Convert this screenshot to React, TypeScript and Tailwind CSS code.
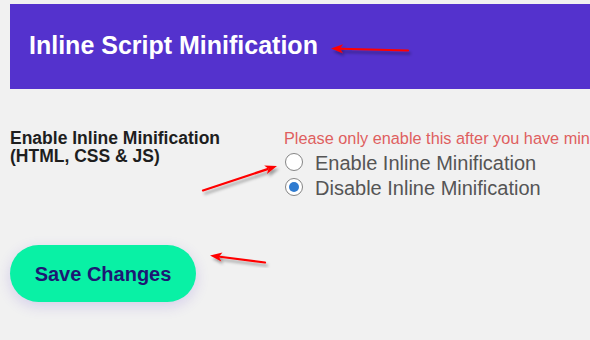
import React from 'react'

type Pt = [number, number]

// red annotation arrows, drawn over the page
function arrowHead(tail: Pt, head: Pt, len = 12, half = 4.5) {
  const dx = head[0] - tail[0]
  const dy = head[1] - tail[1]
  const l = Math.hypot(dx, dy)
  const ux = dx / l
  const uy = dy / l
  const bx = head[0] - ux * len
  const by = head[1] - uy * len
  const nx = -uy
  const ny = ux
  const notchX = head[0] - ux * (len - 3)
  const notchY = head[1] - uy * (len - 3)
  return {
    points: [
      `${head[0]},${head[1]}`,
      `${bx + nx * half},${by + ny * half}`,
      `${notchX},${notchY}`,
      `${bx - nx * half},${by - ny * half}`,
    ].join(' '),
    shaftEnd: [head[0] - ux * (len - 2), head[1] - uy * (len - 2)] as Pt,
  }
}

const arrows: { tail: Pt; head: Pt }[] = [
  { tail: [408, 50.5], head: [331, 48.5] },
  { tail: [203, 190.5], head: [277, 166] },
  { tail: [265, 262.5], head: [210, 255.5] },
]

function Annotations() {
  return (
    <svg
      className="pointer-events-none absolute inset-0"
      width={590}
      height={340}
      viewBox="0 0 590 340"
    >
      <defs>
        <filter id="shadow" x="-20%" y="-50%" width="140%" height="200%">
          <feDropShadow dx="2" dy="3" stdDeviation="1.5" floodColor="#000" floodOpacity="0.35" />
        </filter>
      </defs>
      {arrows.map((a, i) => {
        const h = arrowHead(a.tail, a.head)
        return (
          <g key={i} filter="url(#shadow)">
            <line
              x1={a.tail[0]}
              y1={a.tail[1]}
              x2={h.shaftEnd[0]}
              y2={h.shaftEnd[1]}
              stroke="#ff0000"
              strokeWidth={2.2}
              strokeLinecap="round"
            />
            <polygon points={h.points} fill="#ff0000" />
          </g>
        )
      })}
    </svg>
  )
}

function Radio({ checked, label }: { checked?: boolean; label: string }) {
  return (
    <label className="flex h-[25px] items-start">
      <span className="ml-[1px] mr-[12px] mt-[2px] flex h-[18px] w-[18px] shrink-0 items-center justify-center rounded-full border border-[#858585] bg-white">
        {checked && <span className="h-[10px] w-[10px] rounded-full bg-[#2f7bd0]" />}
      </span>
      <span className="whitespace-nowrap text-[20px] leading-[25px] text-[#555555]">{label}</span>
    </label>
  )
}

export default function App() {
  return (
    <div className="relative h-[340px] w-[590px] overflow-hidden bg-[#f1f1f1] font-['Liberation_Sans',Arial,sans-serif]">
      <div className="ml-[10px] mt-[4px] h-[85px] bg-[#5432cd] pl-[19px] pt-[29px]">
        <h1 className="text-[25px] font-bold leading-none text-white">Inline Script Minification</h1>
      </div>

      <div className="mt-[40px] flex">
        <div className="w-[284px] shrink-0 pl-[10px] text-[17.5px] font-bold leading-[18px] text-[#1e1e1e]">
          Enable Inline Minification
          <br />
          (HTML, CSS &amp; JS)
        </div>
        <div className="min-w-0 flex-1">
          <p className="whitespace-nowrap text-[16.3px] leading-[18px] text-[#df5f5f]">
            Please only enable this after you have minified and tested your site
          </p>
          <div className="mt-[4px] flex flex-col">
            <Radio label="Enable Inline Minification" />
            <Radio checked label="Disable Inline Minification" />
          </div>
        </div>
      </div>

      <div className="ml-[10px] mt-[44px]">
        <button
          type="button"
          className="h-[57px] w-[186px] rounded-full bg-[#09f1a5] text-[20px] font-bold text-[#1d1873] shadow-[0_4px_14px_rgba(84,50,205,0.18)]"
        >
          Save Changes
        </button>
      </div>

      <Annotations />
    </div>
  )
}
